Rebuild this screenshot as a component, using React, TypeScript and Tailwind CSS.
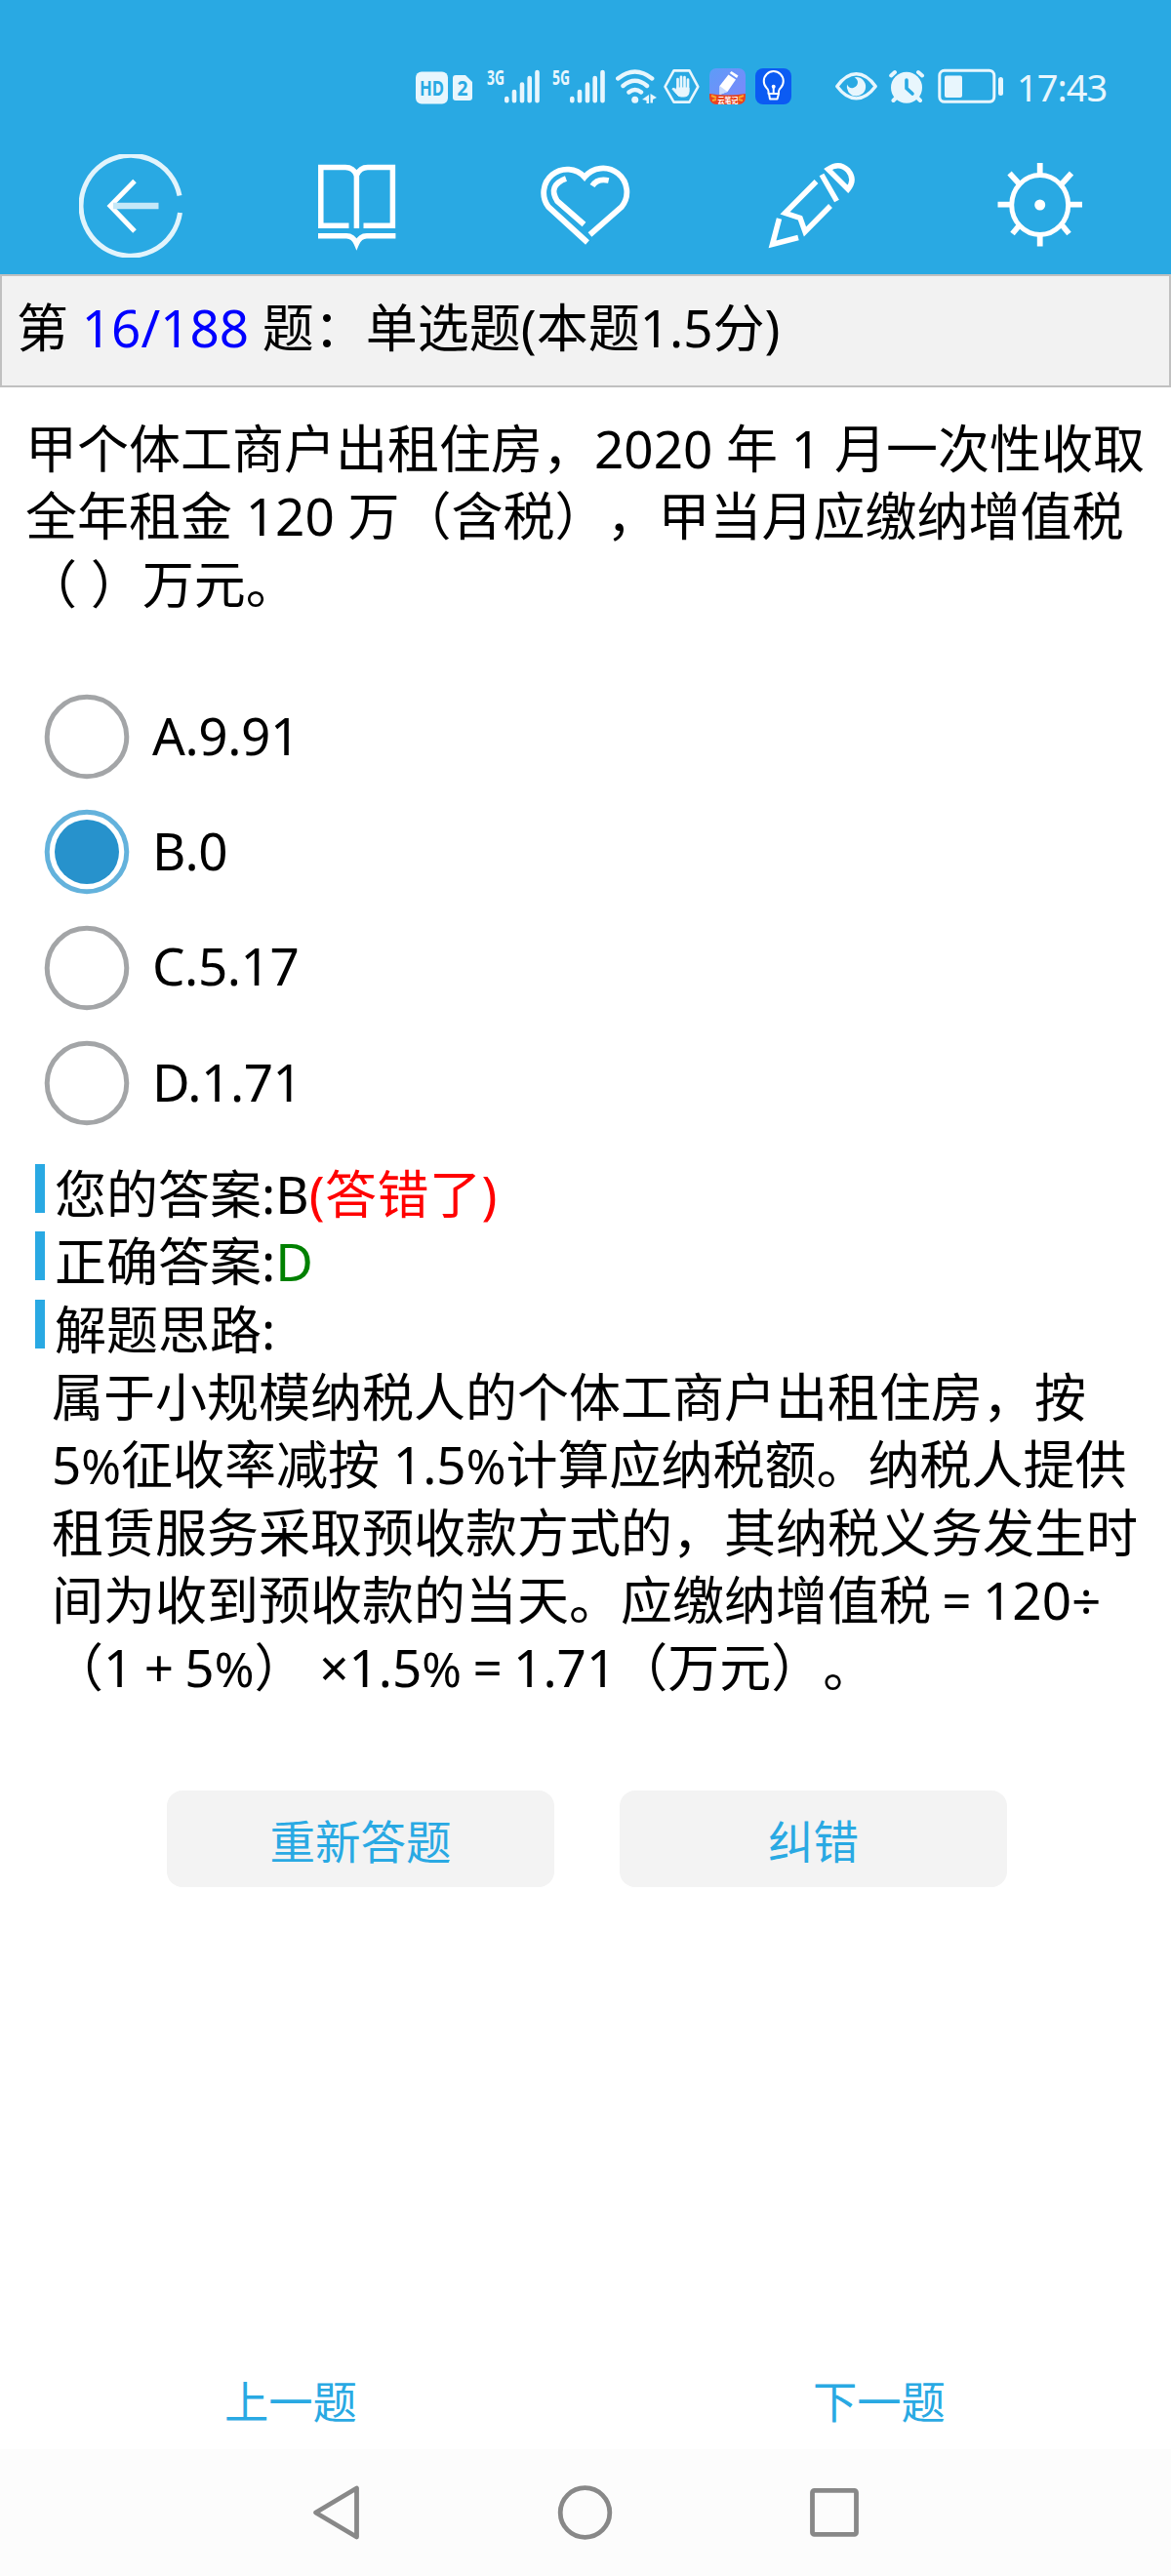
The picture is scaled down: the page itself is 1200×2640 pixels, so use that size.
import React from "react";

const question = [
  "甲个体工商户出租住房，2020 年 1 月一次性收取",
  "全年租金 120 万（含税），甲当月应缴纳增值税",
  "（ ）万元。",
];

const options = [
  { label: "A.9.91", checked: false },
  { label: "B.0", checked: true },
  { label: "C.5.17", checked: false },
  { label: "D.1.71", checked: false },
];

function Signal({ label, className }: { label: string; className: string }) {
  return (
    <svg className={`overflow-visible ${className}`} width="54" height="37" viewBox="0 0 54 37">
      <text x="0" y="17" fontSize="21" fontWeight="700" textLength="18" lengthAdjust="spacingAndGlyphs" fill="#e8f6fd">
        {label}
      </text>
      <path d="M20.300 31v2.300M28 24v9.300M36 16.500v16.800M43.700 10v23.300M51.500 4v29.300" stroke="#e8f6fd" strokeWidth="4.600" strokeLinecap="round" />
    </svg>
  );
}

function StatusBar() {
  return (
    <div className="flex items-start h-[141px] pt-[70px] pl-[426px]">
      <svg width="58" height="37" viewBox="0 0 58 37">
        <rect x="0" y="3.500" width="33" height="33" rx="6" fill="#e8f6fd" />
        <text x="4" y="28" fontSize="21" fontWeight="700" textLength="25" lengthAdjust="spacingAndGlyphs" fill="#29a9e3">
          HD
        </text>
        <path d="M41 7h10l7 7v16a3 3 0 0 1-3 3H41a3 3 0 0 1-3-3V10a3 3 0 0 1 3-3z" fill="#e8f6fd" />
        <text x="42.500" y="28" fontSize="22" fontWeight="700" textLength="11" lengthAdjust="spacingAndGlyphs" fill="#29a9e3">
          2
        </text>
      </svg>
      <Signal label="3G" className="ml-[15px]" />
      <Signal label="5G" className="ml-[13px]" />

      <svg className="ml-[11px]" width="42" height="37" viewBox="0 0 42 37" fill="none" stroke="#e8f6fd" strokeWidth="4.400" strokeLinecap="round">
        <path d="M2.200 10.500Q19.700-3.500 37.200 10.500M7.500 18Q19.700 7.500 32 18M13.500 24.500Q19.700 19.500 26 24.500" />
        <circle cx="19.700" cy="32.300" r="3.500" fill="#e8f6fd" stroke="none" />
        <path d="M34 27v9h-2.500v-3L27 32zM35.500 26l6.500 4-4 2v3.500h-2.500z" fill="#e8f6fd" stroke="none" />
      </svg>

      <svg className="ml-[7px]" width="37" height="37" viewBox="0 0 37 37" fill="none" stroke="#e8f6fd" strokeLinecap="round" strokeLinejoin="round">
        <path d="M10.500 2.400h16L35.300 18.800l-8.800 15.800h-16L1.500 18.800z" strokeWidth="2.600" />
        <path d="M14.500 11v12M18 8.800v12M21.500 9v12M25 11.500v12" strokeWidth="2.700" />
        <path d="M13.500 20h12.500v4q0 5-5 5h-3q-3 0-4.500-2.500L8.800 21q1.500-2 4.700 1.500z" fill="#e8f6fd" strokeWidth="1" />
      </svg>

      <svg className="ml-[10px]" width="37" height="37" viewBox="0 0 37 37">
        <defs>
          <linearGradient id="note" x1="0" y1="0" x2="1" y2="1">
            <stop offset="0" stopColor="#5d9cf8" />
            <stop offset="1" stopColor="#7f86fb" />
          </linearGradient>
          <clipPath id="noteClip">
            <rect width="37" height="37" rx="7" />
          </clipPath>
        </defs>
        <g clipPath="url(#noteClip)">
          <rect width="37" height="37" fill="url(#note)" />
          <path d="M10.500 18 19.500 6.500l7.500 5L18.500 24l-8 3z" fill="#fff" />
          <path d="M20.800 5l1.700-2 7 4.500-1.500 2.500z" fill="#fff" />
          <path d="M10.500 18l8 6-8 3z" fill="#c8dbff" />
          <path d="M0 26q18.500 3 37 0v11H0z" fill="#e8431f" />
          <path d="M2 28l5 2M3 33l4-1M35 28l-5 2M34 33l-4-1" stroke="#f9a72b" strokeWidth="2" />
          <text x="8.500" y="35.500" fontSize="8" fontWeight="700" textLength="21" lengthAdjust="spacingAndGlyphs" fill="#fff">
            云笔记
          </text>
        </g>
      </svg>

      <svg className="ml-[10px]" width="37" height="37" viewBox="0 0 37 37" fill="none" stroke="#fff" strokeWidth="2" strokeLinejoin="round">
        <rect width="37" height="37" rx="8" fill="#0b5bf3" stroke="none" />
        <path d="M13.500 26v-2.500q0-1.500-2-3.500a10 10 0 1 1 14.500 0q-2 2-2 3.500V26zM14 26l1 5.500h7.500L24 26M18.700 20v6" />
        <circle cx="18.700" cy="18.800" r="2" fill="#fff" stroke="none" />
      </svg>

      <svg className="ml-[45px]" width="43" height="37" viewBox="0 0 43 37" fill="none">
        <path d="M1.800 18.500C14 1.500 29 1.500 41.200 18.500 29 35 14 35 1.800 18.500z" stroke="#e8f6fd" strokeWidth="3.400" strokeLinejoin="round" />
        <path d="M21.500 9a9.700 9.700 0 1 1-9.500 7.500q2 4.500 6.500 3.500 4.500-1.500 4.500-6-.5-3.500-3.500-4.500z" fill="#e8f6fd" />
      </svg>

      <svg className="ml-[12px]" width="37" height="37" viewBox="0 0 37 37" fill="none" stroke="#e8f6fd" strokeWidth="4" strokeLinecap="round">
        <circle cx="18" cy="19.800" r="16" fill="#e8f6fd" stroke="none" />
        <path d="M2.200 7.500 6 4M34 7.500 30 4M7 30.500 4.500 33M29.500 30.500 32 33" />
        <path d="M18 12v8.500l6 5.500" stroke="#29a9e3" strokeWidth="3.600" />
      </svg>

      <svg className="ml-[13px]" width="68" height="37" viewBox="0 0 68 37">
        <rect x="1.800" y="2.300" width="56" height="32" rx="5" fill="none" stroke="#e8f6fd" strokeWidth="3" />
        <rect x="7" y="7.500" width="18" height="22.500" rx="2" fill="#e8f6fd" />
        <rect x="62" y="9" width="5" height="19" rx="2.500" fill="#e8f6fd" />
      </svg>

      <span className="ml-[13px] text-[38px] leading-[38px] text-[#e8f6fd] tracking-[-1px]">17:43</span>
    </div>
  );
}

function Toolbar() {
  return (
    <div className="flex items-start h-[140px] pt-[17px] pl-[81px]">
      <svg width="106" height="106" viewBox="81 158 106 106" fill="none" stroke="#fff" strokeWidth="5">
        <path d="M184 200.500A51 51.500 0 1 0 184.500 218" stroke="#e2f4fc" />
        <path d="M138 185.500 113 211l25 26" />
        <path d="M116 211h46.500" stroke="#c5e8f8" strokeWidth="6.500" />
      </svg>
      <svg className="ml-[138px]" width="81" height="106" viewBox="325 158 81 106" fill="none" stroke="#fff" strokeWidth="5.500">
        <path d="M357.500 231.200H328.800V171.500H354q8 0 11.400 8 3.500-8 11.500-8h25.500v59.700H372.500" />
        <path d="M365.400 178v56" />
        <path d="M326 241.700h29q7 0 10.400 8 3.500-8 10.500-8h29.500" />
      </svg>
      <svg className="ml-[146px]" width="94" height="106" viewBox="552 158 94 106" fill="none" stroke="#fff" strokeWidth="5.800">
        <path d="M602 248.500 562 212A24 24 0 0 1 599 181.500 24 24 0 0 1 637 212L604.500 240.500" />
        <path d="M598.500 230 571 206Q561 190 580 183M607 190.500Q612 182.500 623.700 185" />
      </svg>
      <svg className="ml-[141px]" width="90" height="106" viewBox="787 158 90 106" fill="none" stroke="#fff" strokeWidth="5.500">
        <path d="M836.500 186 804.500 218.300 820 223.500 825 237.500 851 211" />
        <path d="M842 179 857.500 206M848.500 173.500Q860 165.500 869 174.500 877 184 869 194z" />
        <path d="M798.500 224 791.500 250.500 818 243.500" />
      </svg>
      <svg className="ml-[145px]" width="88" height="106" viewBox="1022 158 88 106" fill="none" stroke="#fff" strokeWidth="5">
        <ellipse cx="1065.700" cy="210" rx="29" ry="30.500" />
        <path d="M1065.700 167v14M1065.700 239v13.500M1022.500 209.700h14M1095 209.700h14M1034.500 177.500l10 11M1098 177.500l-10 11M1037.500 239.500l7-8.500M1095.500 239.500l-7-8.500" strokeWidth="5.800" />
        <circle cx="1065.700" cy="210" r="5.500" fill="#fff" stroke="none" />
      </svg>
    </div>
  );
}

function Radio({ checked }: { checked: boolean }) {
  return (
    <svg width="88" height="88" viewBox="0 0 88 88" fill="none">
      <circle cx="44" cy="44" r="40.800" stroke={checked ? "#63b2dc" : "#a3a5a7"} strokeWidth="5" />
      {checked && <circle cx="44" cy="44" r="33" fill="#2792cc" />}
    </svg>
  );
}

function AnswerRow({ children }: { children: React.ReactNode }) {
  return (
    <div className="flex items-start h-[69.3px]">
      <div className="w-[10px] h-[50px] mt-[3px] bg-[#29a9e3]" />
      <p className="ml-[10px] -mt-px">{children}</p>
    </div>
  );
}

// operator that takes one full character cell
function Op({ children }: { children: React.ReactNode }) {
  return <span className="inline-block w-[53px] text-center">{children}</span>;
}

function Percent() {
  return <span className="text-[49px] leading-none">%</span>;
}

function App() {
  return (
    <div className="flex flex-col w-[1200px] h-[2640px] bg-white text-black overflow-hidden whitespace-pre text-[53px] leading-[69.3px] [text-spacing-trim:space-all] font-['Noto_Sans','Noto_Sans_CJK_SC',sans-serif]">
      <div className="bg-[#29a9e3] h-[281px] shrink-0">
        <StatusBar />
        <Toolbar />
      </div>

      <div className="h-[116px] shrink-0 border-2 border-[#c0c0c0] bg-[#f2f2f2] pl-[15px] pt-[18px]">
        第 <span className="text-[#0000ff]">16/188</span> 题：单选题(本题1.5分)
      </div>

      <div className="pl-[26px] pt-[28px]">
        {question.map((line) => (
          <p key={line}>{line}</p>
        ))}
      </div>

      <div className="flex flex-col pl-[45px] pt-[63px]">
        {options.map((o) => (
          <div key={o.label} className="flex items-center h-[118.3px]">
            <Radio checked={o.checked} />
            <span className="ml-[23px] pb-[3px] tracking-[-0.4px]">{o.label}</span>
          </div>
        ))}
      </div>

      <div className="pl-[36px] pt-[21px]">
        <AnswerRow>
          您的答案:B<span className="text-[#ff0000] tracking-[0.5px]">(答错了)</span>
        </AnswerRow>
        <AnswerRow>
          正确答案:<span className="text-[#008000]">D</span>
        </AnswerRow>
        <AnswerRow>解题思路:</AnswerRow>
        <div className="pl-[17px] -mt-px">
          <p>属于小规模纳税人的个体工商户出租住房，按</p>
          <p>
            5<Percent />征收率减按 1.5<Percent />计算应纳税额。纳税人提供
          </p>
          <p>租赁服务采取预收款方式的，其纳税义务发生时</p>
          <p>
            间为收到预收款的当天。应缴纳增值税<Op>=</Op>120÷
          </p>
          <p>
            （1<Op>+</Op>5<Percent />） ×1.5<Percent /><Op>=</Op>1.71（万元）。
          </p>
        </div>
      </div>

      <div className="flex gap-[67px] pl-[171px] pt-[92px] text-[46.5px] text-[#29a9e3]">
        <button className="w-[397px] h-[99px] pt-[5px] rounded-2xl bg-[#f3f3f3]">重新答题</button>
        <button className="w-[397px] h-[99px] pt-[5px] rounded-2xl bg-[#f3f3f3]">纠错</button>
      </div>

      <div className="flex mt-auto h-[83px] shrink-0 pl-[230px] text-[45.300px] text-[#29a9e3]">
        <span className="w-[603px]">上一题</span>
        <span>下一题</span>
      </div>

      <div className="flex items-center shrink-0 h-[130px] bg-[#fcfcfc] pl-[319px]">
        <svg width="52" height="60" viewBox="0 0 52 60" fill="none" stroke="#888" strokeWidth="4.800" strokeLinejoin="round">
          <path d="M46.500 5v50L4.500 30z" />
        </svg>
        <svg className="ml-[198px]" width="60" height="60" viewBox="0 0 60 60" fill="none" stroke="#888" strokeWidth="4.800">
          <circle cx="30.500" cy="30" r="25.300" />
        </svg>
        <svg className="ml-[199px]" width="54" height="60" viewBox="0 0 54 60" fill="none" stroke="#888" strokeWidth="4.800">
          <rect x="4.500" y="7.400" width="45" height="45" rx="2" />
        </svg>
      </div>
    </div>
  );
}

export default App;
